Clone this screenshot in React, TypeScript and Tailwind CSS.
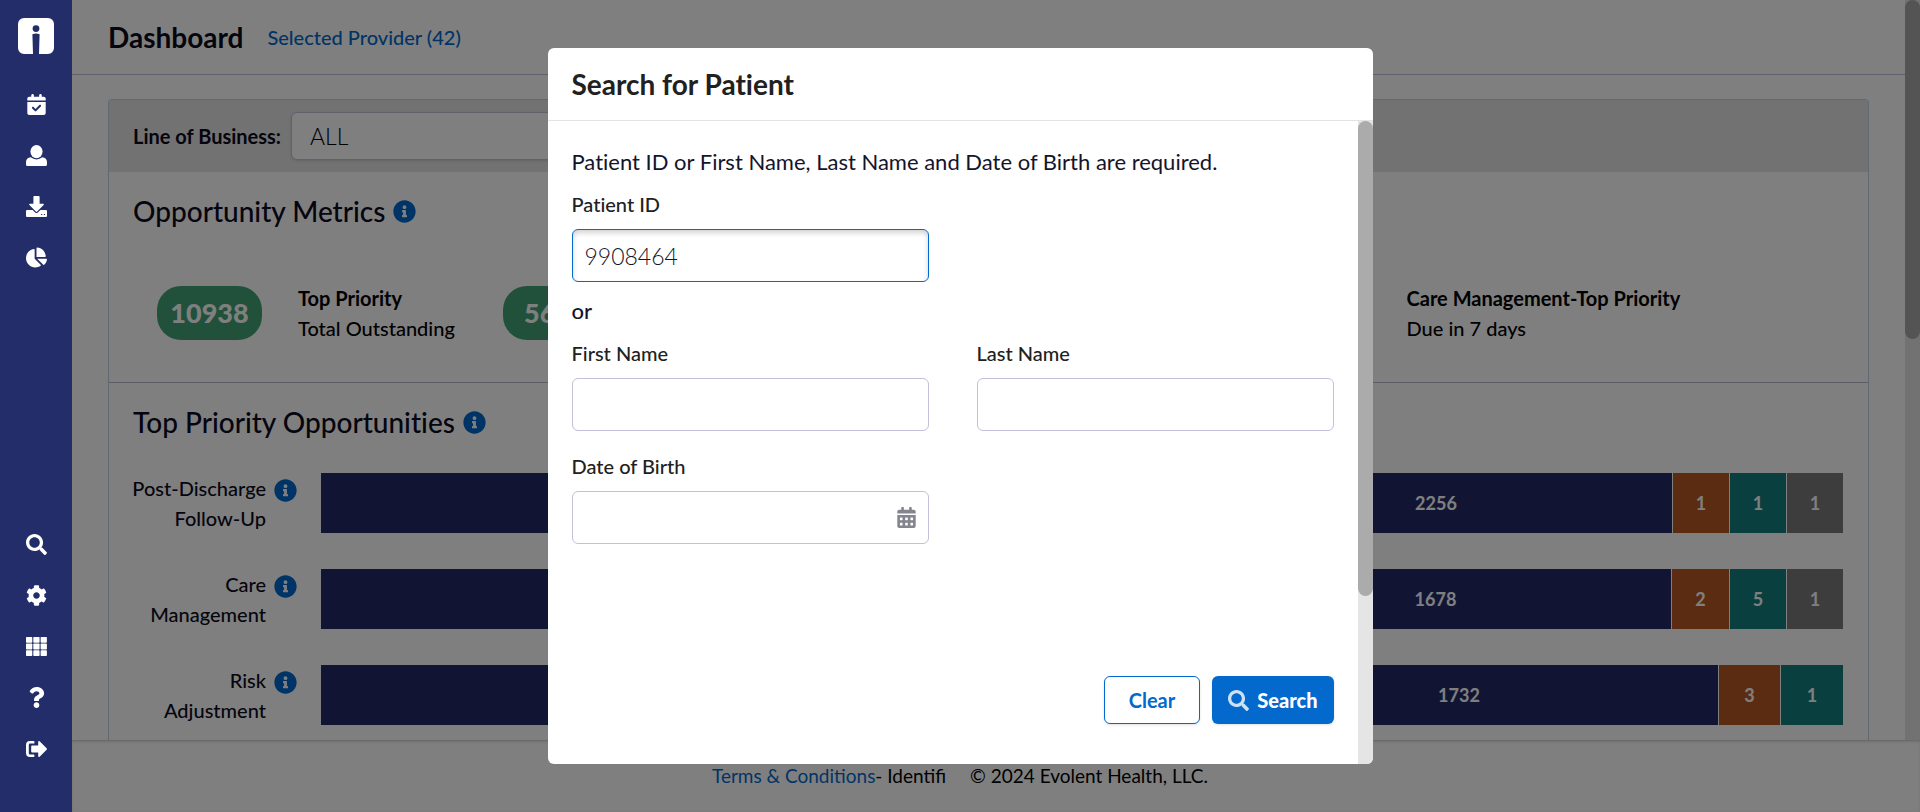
import { useState, type ReactNode } from "react";
import {
  FaCalendarAlt,
  FaChartPie,
  FaCog,
  FaInfoCircle,
  FaQuestion,
  FaSearch,
} from "react-icons/fa";
import { FaCalendarCheck } from "react-icons/fa6";

function Logo() {
  return (
    <svg viewBox="0 0 36 36" className="h-9 w-9" aria-hidden="true">
      <path
        fill="#fff"
        fillRule="evenodd"
        d="M6 0H30A6 6 0 0 1 36 6V30A6 6 0 0 1 30 36H21L21.6 16.2Q18 14.6 14.4 16.2L15 36H6A6 6 0 0 1 0 30V6A6 6 0 0 1 6 0ZM18 7.2A3.4 3.4 0 1 0 18 14A3.4 3.4 0 1 0 18 7.2Z"
      />
    </svg>
  );
}

function UserIcon() {
  return (
    <svg viewBox="0 0 21 21" className="h-[21px] w-[21px]" fill="currentColor" aria-hidden="true">
      <ellipse cx="10.5" cy="6.6" rx="6.1" ry="6.6" />
      <path d="M4.8 12.3Q7.2 14.4 10.5 14.4T16.2 12.3Q21 12.8 21 17.2V19.4Q21 21 19.4 21H1.6Q0 21 0 19.4V17.2Q0 12.8 4.8 12.3Z" />
    </svg>
  );
}

function DownloadIcon() {
  return (
    <svg viewBox="0 0 21 21" className="h-[21px] w-[21px]" fill="currentColor" aria-hidden="true">
      <path d="M8.2 0H12.8Q13.6 0 13.6 .9V7.8H17.2Q18.4 7.9 17.6 8.9L11.2 15.6Q10.5 16.2 9.8 15.6L3.4 8.9Q2.6 7.9 3.8 7.8H7.4V.9Q7.4 0 8.2 0Z" />
      <path
        fillRule="evenodd"
        d="M1 14H6.6L9.2 16.6Q10.5 17.6 11.8 16.6L14.4 14H20Q21 14 21 15V20Q21 21 20 21H1Q0 21 0 20V15Q0 14 1 14ZM15 18H16.2V19H15ZM17.8 18H19V19H17.8Z"
      />
    </svg>
  );
}

function GridIcon() {
  return (
    <svg viewBox="0 0 21 19" className="h-[19px] w-[21px]" fill="currentColor" aria-hidden="true">
      {[0, 6.6, 13.2].map((y) =>
        [0, 7.3, 14.6].map((x) => <rect key={`${x}-${y}`} x={x} y={y} width="6.3" height="5.8" rx="0.7" />),
      )}
    </svg>
  );
}

function SignOutIcon() {
  return (
    <svg viewBox="0 0 21 16" className="h-4 w-[21px]" fill="currentColor" aria-hidden="true">
      <path d="M7.6 0Q8.4 0 8.4 .7V1.9Q8.4 2.6 7.6 2.6H4Q2.8 2.6 2.8 3.8V12.2Q2.8 13.4 4 13.4H7.6Q8.4 13.4 8.4 14.1V15.3Q8.4 16 7.6 16H4Q0 16 0 12V4Q0 0 4 0Z" />
      <path d="M12.2 1V4.6H6.2Q5.2 4.6 5.2 5.6V10.4Q5.2 11.4 6.2 11.4H12.2V15Q12.3 16.3 13.6 15.7L20.6 8.7Q21.2 8 20.6 7.3L13.6 .3Q12.3 -.3 12.2 1Z" />
    </svg>
  );
}

function NavItem({ label, children }: { label: string; children: ReactNode }) {
  return (
    <a
      href="#"
      aria-label={label}
      className="flex h-[51px] w-full items-center justify-center text-[21px] text-white"
    >
      {children}
    </a>
  );
}

function Sidebar() {
  return (
    <nav className="relative z-20 flex w-[72px] shrink-0 flex-col items-center justify-between bg-[#232d69] pt-[18px] pb-[38px]">
      <div className="flex w-full flex-col items-center">
        <Logo />
        <div className="mt-[25px] w-full">
          <NavItem label="Schedule"><FaCalendarCheck /></NavItem>
          <NavItem label="Patients"><UserIcon /></NavItem>
          <NavItem label="Downloads"><DownloadIcon /></NavItem>
          <NavItem label="Reports"><FaChartPie /></NavItem>
        </div>
      </div>
      <div className="w-full">
        <NavItem label="Search"><FaSearch /></NavItem>
        <NavItem label="Settings"><FaCog /></NavItem>
        <NavItem label="Apps"><GridIcon /></NavItem>
        <NavItem label="Help"><FaQuestion /></NavItem>
        <NavItem label="Sign out"><SignOutIcon /></NavItem>
      </div>
    </nav>
  );
}

function Info() {
  return <FaInfoCircle className="shrink-0 text-[23px] text-[#0369cc]" aria-label="More information" />;
}

const metrics = [
  { value: 10938, title: "Top Priority", note: "Total Outstanding" },
  { value: 5632, title: "Top Priority", note: "Due in 1 day" },
  { value: 1686, title: "Care Management-Top Priority", note: "Total Outstanding" },
  { value: 1214, title: "Care Management-Top Priority", note: "Due in 7 days" },
];

type Segment = { value: number; size: number; color: string };

const NAVY = "bg-[#232b67]";
const ORANGE = "bg-[#b85825]";
const TEAL = "bg-[#147e80]";
const GRAY = "bg-[#7a7a7a]";

const opportunities: { label: string[]; segments: Segment[] }[] = [
  {
    label: ["Post-Discharge", "Follow-Up"],
    segments: [
      { value: 4196, size: 878, color: NAVY },
      { value: 2256, size: 472, color: NAVY },
      { value: 1, size: 56, color: ORANGE },
      { value: 1, size: 56, color: TEAL },
      { value: 1, size: 56, color: GRAY },
    ],
  },
  {
    label: ["Care", "Management"],
    segments: [
      { value: 3121, size: 878, color: NAVY },
      { value: 1678, size: 471, color: NAVY },
      { value: 2, size: 57, color: ORANGE },
      { value: 5, size: 56, color: TEAL },
      { value: 1, size: 56, color: GRAY },
    ],
  },
  {
    label: ["Risk", "Adjustment"],
    segments: [
      { value: 2935, size: 878, color: NAVY },
      { value: 1732, size: 518, color: NAVY },
      { value: 3, size: 61, color: ORANGE },
      { value: 1, size: 62, color: TEAL },
    ],
  },
];

function Dashboard() {
  return (
    <div className="flex min-h-0 flex-1 [font-variant-ligatures:none]">
      <main className="flex min-w-0 flex-1 flex-col overflow-hidden">
        <header className="flex h-[75px] shrink-0 items-center gap-6 border-b border-[#c5c0d9] px-9">
          <h1 className="text-[28px] font-bold text-[#0b0b20]">Dashboard</h1>
          <a href="#" className="text-xl font-medium text-[#0369cc]">Selected Provider (42)</a>
        </header>
        <section className="mx-9 mt-6 flex-1 rounded-t border border-b-0 border-[#bfd3e6]">
          <div className="flex h-[72px] items-center gap-[10px] bg-[#e4e4e4] px-6">
            <label htmlFor="lob" className="text-xl font-bold text-[#0b0b20]">Line of Business:</label>
            <select
              id="lob"
              className="h-12 w-[360px] appearance-none rounded-md border border-[#c5c0d9] bg-white px-[18px] text-[23px] font-light text-black shadow"
            >
              <option>ALL</option>
            </select>
          </div>
          <div className="border-b border-[#bdb9c9] px-6 pt-[21px] pb-[39px]">
            <h2 className="flex items-center gap-2 text-[28px] leading-9 font-medium text-[#0b0b20]">
              Opportunity Metrics <Info />
            </h2>
            <ul className="mt-[54px] flex gap-12 px-6">
              {metrics.map((m, i) => (
                <li key={i} className="flex items-center gap-9">
                  <span className="flex h-[54px] w-[105px] items-center justify-center rounded-3xl bg-[#42a277] text-[27px] font-black text-white">
                    {m.value}
                  </span>
                  <span className="text-xl leading-[30px] font-medium whitespace-nowrap text-black">
                    <strong className="block font-bold">{m.title}</strong>
                    {m.note}
                  </span>
                </li>
              ))}
            </ul>
          </div>
          <div className="px-6 pt-[21px]">
            <h2 className="flex items-center gap-2 text-[28px] leading-9 font-medium text-[#0b0b20]">
              Top Priority Opportunities <Info />
            </h2>
            <div className="mt-[33px] flex flex-col gap-9 pr-px">
              {opportunities.map((o) => (
                <div key={o.label[0]} className="flex gap-6">
                  <div className="flex w-[164px] shrink-0 justify-end gap-2">
                    <span className="text-right text-xl leading-[30px] font-medium whitespace-nowrap text-[#0b0b20]">
                      {o.label[0]}
                      <br />
                      {o.label[1]}
                    </span>
                    <span className="pt-[6px]"><Info /></span>
                  </div>
                  <div className="flex h-[60px] min-w-0 flex-1 gap-px">
                    {o.segments.map((s, i) => (
                      <div
                        key={i}
                        className={`flex basis-0 items-center justify-center text-lg font-bold text-white ${s.color}`}
                        style={{ flexGrow: s.size }}
                      >
                        {s.value}
                      </div>
                    ))}
                  </div>
                </div>
              ))}
            </div>
          </div>
        </section>
      </main>
      <div className="w-[15px] shrink-0 bg-[#e4e4e4]">
        <div className="h-[339px] rounded-lg bg-[#a8a8a8]" />
      </div>
    </div>
  );
}

const fieldClass = "h-[53px] w-full rounded-md border px-3 text-[23px] font-light text-[#14142b] outline-none";

function Field({
  id,
  label,
  value = "",
  focused = false,
  icon,
}: {
  id: string;
  label: string;
  value?: string;
  focused?: boolean;
  icon?: ReactNode;
}) {
  const [text, setText] = useState(value);
  return (
    <div className="relative">
      <label htmlFor={id} className="mb-3 block text-xl leading-[26px] font-medium text-[#212121]">
        {label}
      </label>
      <input
        id={id}
        value={text}
        onChange={(e) => setText(e.target.value)}
        className={`${fieldClass} ${
          focused
            ? "border-[#0369cc] shadow-[inset_0_3px_5px_rgba(34,36,38,0.2)]"
            : "border-[#c5c0d9]"
        }`}
      />
      {icon && <span className="absolute right-3 bottom-4 text-[21px] text-[#85858f]">{icon}</span>}
    </div>
  );
}

function PatientDialog() {
  return (
    <div
      role="dialog"
      aria-modal="true"
      aria-labelledby="dialog-title"
      className="flex h-[716px] w-[825px] flex-col overflow-hidden rounded-md bg-white [font-variant-ligatures:none]"
    >
      <header className="flex h-[73px] shrink-0 items-center border-b border-[#e2e3e5] px-6">
        <h2 id="dialog-title" className="text-[28px] font-bold text-[#212121]">Search for Patient</h2>
      </header>
      <div className="flex min-h-0 flex-1">
        <form className="flex min-w-0 flex-1 flex-col px-6 pt-6 pb-10">
          <p className="mb-3 text-[22px] leading-[34px] font-normal text-[#14142b]">
            Patient ID or First Name, Last Name and Date of Birth are required.
          </p>
          <div className="grid grid-cols-2 gap-x-12">
            <Field id="patient-id" label="Patient ID" value="9908464" focused />
          </div>
          <p className="my-3 text-[22px] leading-[34px] font-medium text-[#14142b]">or</p>
          <div className="grid grid-cols-2 gap-x-12 gap-y-[22px]">
            <Field id="first-name" label="First Name" />
            <Field id="last-name" label="Last Name" />
            <Field id="dob" label="Date of Birth" icon={<FaCalendarAlt />} />
          </div>
          <div className="mt-auto flex justify-end gap-3">
            <button
              type="button"
              className="h-12 rounded-md border border-[#0369cc] bg-white px-6 text-xl font-bold text-[#0369cc] shadow-sm"
            >
              Clear
            </button>
            <button
              type="submit"
              className="flex h-12 items-center gap-2 rounded-md bg-[#0369cc] px-4 text-xl font-black text-white shadow"
            >
              <FaSearch className="text-[21px] opacity-80" />
              Search
            </button>
          </div>
        </form>
        <div className="w-[15px] shrink-0 bg-[#e5e5e5]">
          <div className="h-[475px] rounded-lg bg-[#ababab]" />
        </div>
      </div>
    </div>
  );
}

export default function App() {
  return (
    <div className="relative flex h-screen overflow-hidden bg-white font-['Lato',sans-serif]">
      <Sidebar />
      <div className="flex min-w-0 flex-1 flex-col">
        <Dashboard />
        <footer className="z-0 flex h-[72px] shrink-0 items-center justify-center gap-6 border-t border-[#d4d4d5] bg-white pr-[72px] text-[19px] font-normal text-black shadow-[inset_0_1px_3px_rgba(0,0,0,0.12)]">
          <span>
            <a href="#" className="text-[#0369cc]">Terms &amp; Conditions</a>- Identifi
          </span>
          <span>© 2024 Evolent Health, LLC.</span>
        </footer>
      </div>
      <div className="absolute inset-0 z-10 flex items-center justify-center bg-black/50">
        <PatientDialog />
      </div>
    </div>
  );
}
